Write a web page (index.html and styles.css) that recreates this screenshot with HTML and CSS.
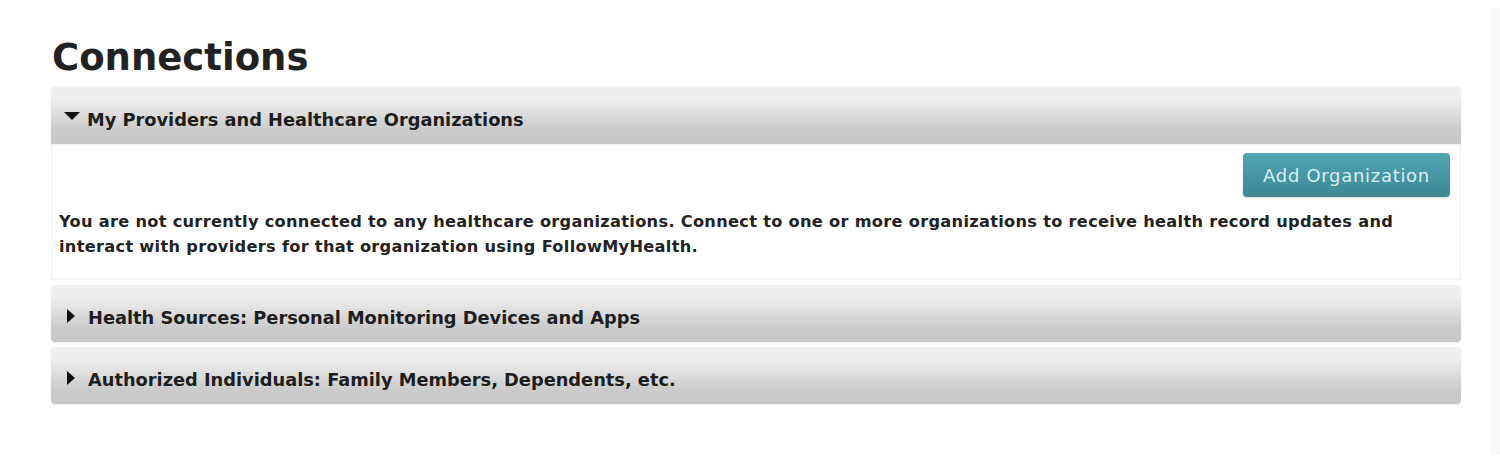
FILE: index.html
```html
<!DOCTYPE html>
<html>
<head>
<meta charset="utf-8">
<link rel="stylesheet" href="styles.css">
</head>
<body>
<div class="page">
  <main class="main">
    <h1 class="title">Connections</h1>
    <section class="panel">
      <div class="panel-head"><span class="tri tri-down"></span>My Providers and Healthcare Organizations</div>
      <div class="panel-body">
        <div class="actions"><button class="btn">Add Organization</button></div>
        <p class="msg">You are not currently connected to any healthcare organizations. Connect to one or more organizations to receive health record updates and interact with providers for that organization using FollowMyHealth.</p>
      </div>
    </section>
    <section class="panel">
      <div class="panel-head"><span class="tri tri-right"></span>Health Sources: Personal Monitoring Devices and Apps</div>
    </section>
    <section class="panel">
      <div class="panel-head"><span class="tri tri-right"></span>Authorized Individuals: Family Members, Dependents, etc.</div>
    </section>
  </main>
  <aside class="strip"></aside>
</div>
</body>
</html>
```
FILE: styles.css
```css
html, body {
  margin: 0;
  padding: 0;
  background: #ffffff;
}
body {
  font-family: "DejaVu Sans", "Liberation Sans", sans-serif;
  color: #222;
}
.page {
  display: flex;
  width: 1500px;
  height: 470px;
}
.main {
  width: 1410px;
  margin-left: 51px;
  padding-top: 30px;
}
.strip {
  margin-left: 30px;
  margin-top: 8px;
  width: 9px;
  height: 447px;
  background: #f6f7f9;
}
.title {
  margin: 0 0 0 1px;
  font-size: 37px;
  font-weight: 600;
  line-height: 56px;
  color: #222;
}
.panel {
  margin-bottom: 5px;
}
.panel-head {
  height: 57px;
  box-sizing: border-box;
  display: flex;
  align-items: center;
  padding: 8px 0 0 13px;
  background: linear-gradient(#f0f0f0, #ececec 25%, #cbcbcb 75%, #c8c8c8);
  border-radius: 4px;
  box-shadow: 0 1px 2px rgba(0,0,0,0.08);
  font-size: 17.8px;
  font-weight: bold;
  color: #1e1e1e;
}
.panel:first-of-type .panel-head {
  height: 58px;
  border-radius: 4px 4px 0 0;
}
.tri {
  display: inline-block;
  width: 0;
  height: 0;
}
.tri-down {
  margin-right: 7px;
  border-left: 8px solid transparent;
  border-right: 8px solid transparent;
  border-top: 8px solid #111;
  margin-top: -7px;
}
.tri-right {
  margin-left: 3px;
  margin-right: 13px;
  border-top: 7px solid transparent;
  border-bottom: 7px solid transparent;
  border-left: 8px solid #111;
  margin-top: -4px;
}
.panel-body {
  height: 136px;
  box-sizing: border-box;
  border: 1px solid #f0f0f0;
  border-top: none;
  padding: 9px 10px 0 6px;
}
.actions {
  display: flex;
  justify-content: flex-end;
}
.btn {
  width: 207px;
  height: 44px;
  padding: 0;
  border: none;
  border-radius: 4px;
  background: linear-gradient(#4fa5b1, #3d8994);
  color: #d9eef1;
  font-family: "DejaVu Sans", sans-serif;
  font-size: 18px;
  letter-spacing: 0.7px;
  box-shadow: 0 1px 2px rgba(0,0,0,0.15);
}
.msg {
  margin: 12px 0 0 1px;
  font-size: 16.2px;
  font-weight: bold;
  letter-spacing: 0.3px;
  line-height: 25px;
  color: #222;
}
```
